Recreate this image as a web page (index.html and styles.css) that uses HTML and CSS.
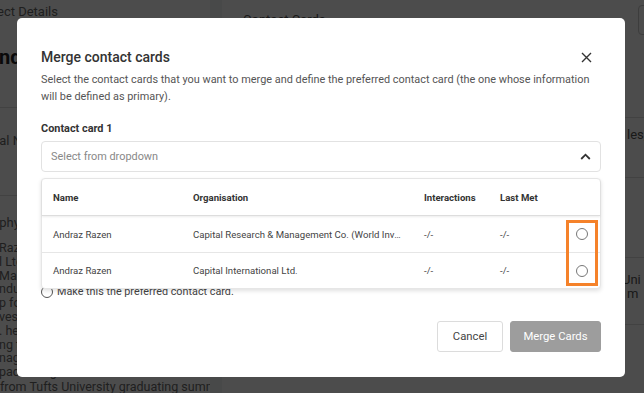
FILE: index.html
```html
<!DOCTYPE html>
<html lang="en">
<head>
<meta charset="utf-8">
<title>Merge contact cards</title>
<link rel="stylesheet" href="styles.css">
</head>
<body>
<div class="bg">
  <div class="left">
    <div class="crumb">Project Details</div>
    <div class="bname">Andraz Razen</div>
    <div class="sec legal">Legal Name</div>
    <div class="sec bio">Biography</div>
    <div class="para">
      <div>Razen is a senior partner</div>
      <div>l Ltd. and a portfolio</div>
      <div>Management Company</div>
      <div>nducted research</div>
      <div>p for the group</div>
      <div>vestment team</div>
      <div>. he was an analyst</div>
      <div>ng the firm</div>
      <div>nagement</div>
      <div>pacific region</div>
    </div>
    <div class="tufts">from Tufts University graduating summa</div>
  </div>
  <div class="gutter"></div>
  <div class="main">
    <div class="mhead"><span>Contact Cards</span><span class="mbtn"></span></div>
    <div class="mrow r2"><span class="frag">les,</span></div>
    <div class="mrow r3"></div>
    <div class="mrow r4"><span class="frag">, Uni</span><span class="frag f2">m</span></div>
  </div>
</div>

<div class="overlay">
  <div class="modal">
    <div class="mtitle">
      <h1>Merge contact cards</h1>
      <svg class="close" width="11" height="11" viewBox="0 0 11 11"><path d="M1 1L10 10M10 1L1 10" stroke="#333" stroke-width="1.4" fill="none"/></svg>
    </div>
    <p class="desc">Select the contact cards that you want to merge and define the preferred contact card (the one whose information will be defined as primary).</p>
    <div class="label">Contact card 1</div>
    <div class="ddwrap">
      <div class="dropdown">
        <span>Select from dropdown</span>
        <svg width="11" height="7" viewBox="0 0 11 7"><path d="M1.2 6L5.5 1.7L9.8 6" stroke="#333" stroke-width="1.8" fill="none"/></svg>
      </div>
      <div class="menu">
        <div class="trow thead">
          <div>Name</div><div>Organisation</div><div>Interactions</div><div>Last Met</div><div></div>
        </div>
        <div class="trow">
          <div>Andraz Razen</div><div class="org">Capital Research &amp; Management Co. (World Investors)</div><div>-/-</div><div>-/-</div><div class="rc"><span class="radio"></span></div>
        </div>
        <div class="trow">
          <div>Andraz Razen</div><div class="org">Capital International Ltd.</div><div>-/-</div><div>-/-</div><div class="rc"><span class="radio"></span></div>
        </div>
        <div class="highlight"></div>
      </div>
    </div>
    <label class="pref"><span class="radio big"></span>Make this the preferred contact card.</label>
    <div class="actions">
      <button class="btn cancel">Cancel</button>
      <button class="btn merge">Merge Cards</button>
    </div>
  </div>
</div>
</body>
</html>
```
FILE: styles.css
```css
* { box-sizing: border-box; }
html, body { margin: 0; padding: 0; }
body {
  width: 644px;
  height: 393px;
  overflow: hidden;
  background: #fff;
  font-family: Roboto, "Liberation Sans", sans-serif;
  color: #333;
}

/* background page */
.bg { display: flex; height: 393px; }
.left { width: 210px; overflow: hidden; color: #6a6a6a; white-space: nowrap; }
.crumb { font-size: 13px; line-height: 16px; padding-top: 4px; margin-left: -26px; }
.bname { font-size: 20px; font-weight: 700; color: #222; line-height: 24px; margin-top: 25px; margin-left: -14px; padding-bottom: 38px; border-bottom: 1px solid #ddd; }
.sec { font-size: 13px; line-height: 16px; }
.legal { margin-left: -22px; padding-top: 25px; padding-bottom: 46px; border-bottom: 1px solid #ddd; }
.bio { margin-left: -38px; padding-top: 19px; }
.para { font-size: 12.5px; line-height: 13.8px; margin-top: 10px; margin-left: -1px; }
.tufts { font-size: 12.5px; line-height: 14px; margin-top: 1px; }
.gutter { width: 12px; background: #f0f4f4; }
.main { flex: 1; overflow: hidden; }
.mhead { display: flex; align-items: flex-start; padding: 12px 0 0 21px; height: 118px; border-bottom: 1px solid #ddd; font-size: 13px; color: #555; }
.mbtn { margin-left: auto; margin-right: -20px; margin-top: -7px; width: 26px; height: 30px; border: 1px solid #ccc; border-radius: 4px; }
.mrow { border-bottom: 1px solid #ddd; font-size: 13px; color: #555; line-height: 14px; }
.r2 { height: 60px; padding: 10px 0 0 405px; }
.r3 { height: 80px; }
.r4 { height: 67px; padding: 1px 0 0 400px; display: flex; flex-direction: column; }
.r4 .f2 { padding-left: 5px; }

/* overlay + modal */
.overlay { position: fixed; inset: 0; background: rgba(0, 0, 0, 0.7); }
.modal {
  position: absolute;
  left: 17px; top: 18px;
  width: 608px; height: 359px;
  background: #fff;
  border-radius: 5px;
  padding: 28px 24px 24px 24px;
  display: flex;
  flex-direction: column;
}
.mtitle { display: flex; align-items: center; justify-content: space-between; height: 22px; padding-right: 9px; }
.mtitle h1 { margin: 0; font-size: 14px; font-weight: 500; color: #333; }
.desc { margin: 3px 0 0; font-size: 10.9px; line-height: 17px; color: #555; }
.label { margin-top: 15px; font-size: 10.9px; font-weight: 700; line-height: 17px; color: #333; }
.ddwrap { position: relative; margin-top: 4px; }
.dropdown {
  height: 31px;
  border: 1px solid #e2e2e2;
  border-radius: 4px;
  display: flex;
  align-items: center;
  justify-content: space-between;
  padding: 0 9px 0 9px;
  font-size: 10.9px;
  color: #888;
}
.menu {
  position: absolute;
  left: 0; right: 0; top: 37px;
  background: #fff;
  border: 1px solid #e6e6e6;
  border-radius: 4px;
  box-shadow: 0 2px 4px rgba(0,0,0,0.12);
  z-index: 2;
}
.trow {
  display: grid;
  grid-template-columns: 140px 231px 76px 66px 1fr;
  align-items: center;
  height: 36px;
  padding: 0 12px 0 11px;
  font-size: 9.6px;
  color: #444;
  border-top: 1px solid #e6e6e6;
}
.trow.thead { border-top: 0; font-weight: 700; color: #333; height: 37px; border-bottom: 1px solid #ddd; box-shadow: 0 1px 2px rgba(0,0,0,0.08); }
.thead + .trow { border-top: 0; }
.org { white-space: nowrap; overflow: hidden; text-overflow: ellipsis; padding-right: 22px; }
.rc { display: flex; justify-content: flex-end; }
.radio { display: inline-block; width: 12px; height: 12px; border: 1.3px solid #777; border-radius: 50%; }
.highlight {
  position: absolute;
  left: 524px; top: 41px;
  width: 32px; height: 66px;
  border: 3px solid #f5822a;
}
.pref {
  margin-top: 111px;
  display: flex;
  align-items: center;
  gap: 4px;
  font-size: 10.8px;
  line-height: 17px;
  color: #444;
}
.radio.big { width: 12px; height: 12px; border-color: #555; }
.actions { display: flex; justify-content: flex-end; gap: 7px; margin-top: 21px; }
.btn {
  height: 31px;
  border-radius: 3px;
  font-family: Roboto, "Liberation Sans", sans-serif;
  font-size: 11.3px;
  padding: 0;
}
.cancel { width: 66px; background: #fff; border: 1px solid #dcdcdc; color: #444; }
.merge { width: 91px; background: #9d9d9d; border: 1px solid #9d9d9d; color: #fff; }
```
